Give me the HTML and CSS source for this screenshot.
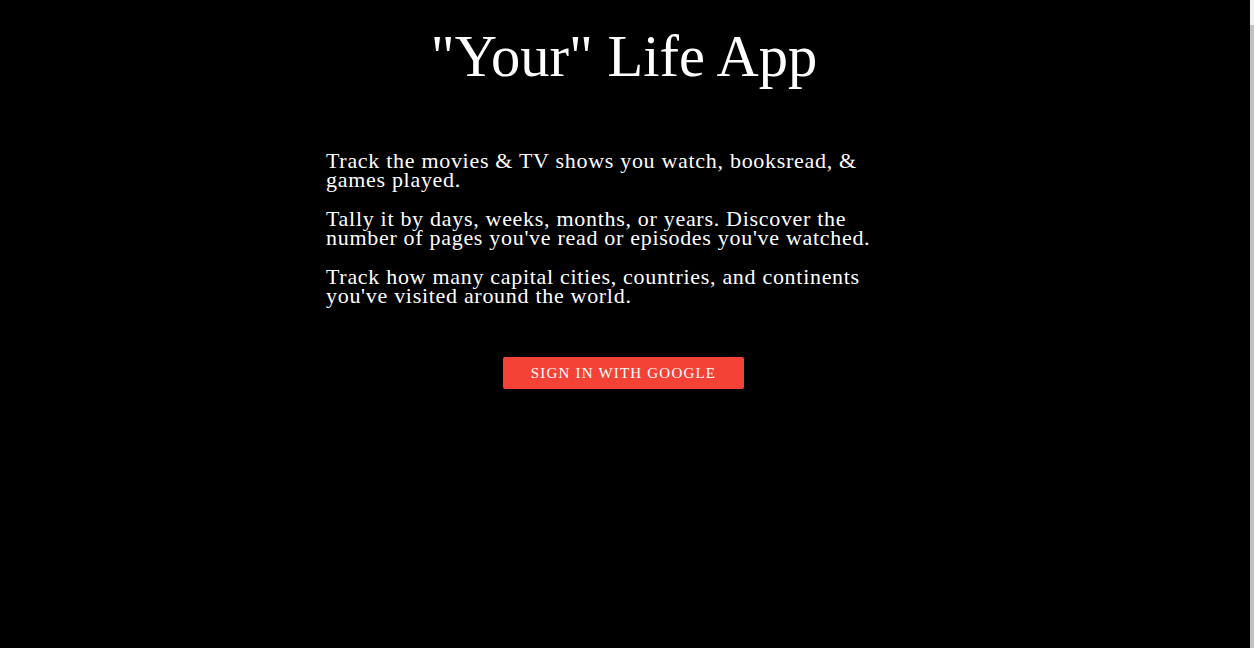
FILE: index.html
```html
<!DOCTYPE html>
<html>
<head>
<meta charset="utf-8">
<link rel="stylesheet" href="styles.css">
</head>
<body>
<div class="frame">
  <main class="page">
    <h1 class="title">"Your" Life App</h1>
    <section class="intro">
      <p>Track the movies &amp; TV shows you watch, booksread, &amp; games played.</p>
      <p>Tally it by days, weeks, months, or years. Discover the number of pages you've read or episodes you've watched.</p>
      <p>Track how many capital cities, countries, and continents you've visited around the world.</p>
    </section>
    <div class="actions">
      <button class="google-btn">SIGN IN WITH GOOGLE</button>
    </div>
  </main>
  <div class="scrollbar"><div class="thumb"></div></div>
</div>
</body>
</html>
```
FILE: styles.css
```css
html, body {
  margin: 0;
  padding: 0;
  background: #000;
  height: 100%;
}
.frame {
  display: flex;
  height: 648px;
  overflow: hidden;
}
.page {
  flex: 1;
  color: #fff;
  font-family: "Liberation Serif", serif;
}
.title {
  margin: 22px 0 0;
  padding-right: 2px;
  text-align: center;
  font-weight: normal;
  font-size: 58.5px;
  line-height: 70px;
}
.intro {
  width: 574px;
  margin: 59px auto 0;
  padding-right: 24px;
  font-size: 22px;
  letter-spacing: 0.7px;
  line-height: 19px;
}
.intro p {
  margin: 0 0 20px;
}
.actions {
  display: flex;
  justify-content: center;
  margin-top: 52px;
  padding-right: 3px;
}
.google-btn {
  width: 241px;
  height: 32px;
  background: #f44336;
  color: #fff;
  border: none;
  border-radius: 2px;
  font-family: "Liberation Serif", serif;
  font-size: 15px;
  letter-spacing: 1.2px;
  padding: 0;
}
.scrollbar {
  width: 4px;
  background: #f1f1f1;
  display: flex;
  flex-direction: column;
}
.thumb {
  margin-top: 25px;
  flex: 1;
  background: #c1c1c1;
}
```
